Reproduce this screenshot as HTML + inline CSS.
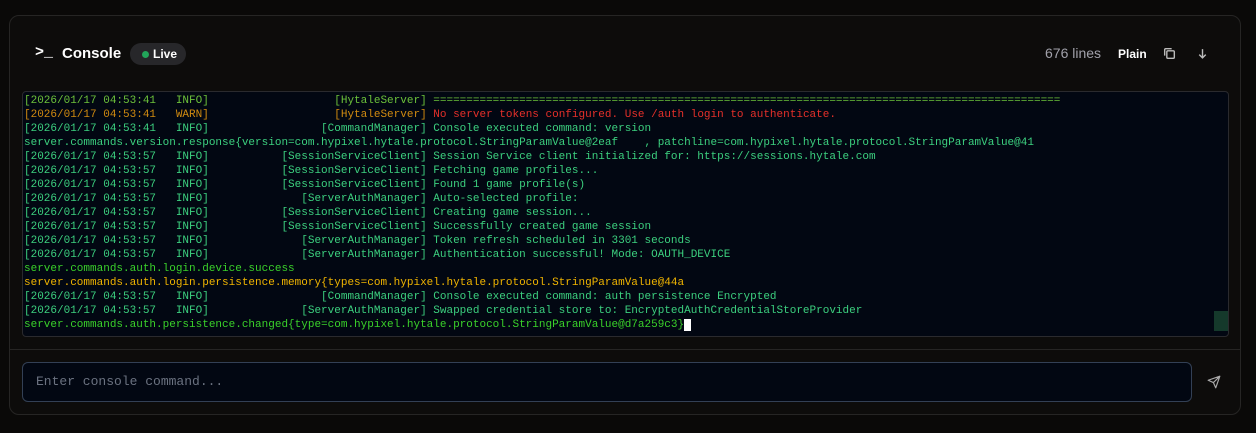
<!DOCTYPE html>
<html><head><style>
*{margin:0;padding:0;box-sizing:border-box}
body{width:1256px;height:433px;background:#0a0908;font-family:"Liberation Sans",sans-serif;position:relative;overflow:hidden}
.panel{position:absolute;left:9px;top:15px;width:1232px;height:400px;background:#0d0c0b;border:1px solid #262524;border-radius:10px}
.log{position:absolute;left:22px;top:91px;width:1207px;height:246px;background:#020712;border:1px solid #2a2a2e;border-radius:4px;overflow:hidden}
pre{font-family:"Liberation Mono",monospace;font-size:11px;line-height:14px;padding:2px 0 0 1px;white-space:pre;color:#3cd07f}
.w{color:#d08a10}.r{color:#e5302a}.o{color:#3ad12a}.y{color:#f0b400}.eq{color:#6cc13a}
.div{position:absolute;left:9px;top:349px;width:1232px;height:1px;background:#262524}
.inp{position:absolute;left:22px;top:362px;width:1170px;height:40px;background:#020712;border:1px solid #334055;border-radius:6px;color:#6b7280;font-family:"Liberation Mono",monospace;font-size:13px;line-height:38px;padding-left:13px}
</style></head><body>
<div class="panel"></div>
<div style="position:absolute;left:35px;top:44px;color:#fff;font-size:15px;font-weight:bold;font-family:'Liberation Mono',monospace">&gt;_</div>
<div style="position:absolute;left:62px;top:45px;color:#fff;font-size:15px;font-weight:bold">Console</div>
<div style="position:absolute;left:130px;top:43px;width:56px;height:22px;background:#27272a;border-radius:11px;color:#fff;font-size:12px;font-weight:bold;line-height:22px;padding-left:23px"><span style="position:absolute;left:12px;top:8px;width:7px;height:7px;border-radius:50%;background:#22a55a"></span>Live</div>
<div style="position:absolute;left:1045px;top:45px;color:#a1a1aa;font-size:14px">676 lines</div>
<div style="position:absolute;left:1118px;top:47px;color:#fff;font-size:12px;font-weight:bold">Plain</div>
<svg style="position:absolute;left:1162px;top:46px" width="15" height="15" viewBox="0 0 14 14" fill="none" stroke="#bbb" stroke-width="1.3"><rect x="4.5" y="4.5" width="7" height="7" rx="1"/><path d="M2.5 9V3.5a1 1 0 0 1 1-1H9"/></svg>
<svg style="position:absolute;left:1196px;top:47px" width="13" height="13" viewBox="0 0 12 12" fill="none" stroke="#bbb" stroke-width="1.3"><path d="M6 2v8M3 7l3 3 3-3"/></svg>
<div class="log"><pre><span class="eq">[2026/01/17 04:53:41   INFO]                   [HytaleServer] ===============================================================================================</span>
<span class="w">[2026/01/17 04:53:41   WARN]                   [HytaleServer] </span><span class="r">No server tokens configured. Use /auth login to authenticate.</span>
[2026/01/17 04:53:41   INFO]                 [CommandManager] Console executed command: version
server.commands.version.response{version=com.hypixel.hytale.protocol.StringParamValue@2eaf    , patchline=com.hypixel.hytale.protocol.StringParamValue@41
[2026/01/17 04:53:57   INFO]           [SessionServiceClient] Session Service client initialized for: https://sessions.hytale.com
[2026/01/17 04:53:57   INFO]           [SessionServiceClient] Fetching game profiles...
[2026/01/17 04:53:57   INFO]           [SessionServiceClient] Found 1 game profile(s)
[2026/01/17 04:53:57   INFO]              [ServerAuthManager] Auto-selected profile:
[2026/01/17 04:53:57   INFO]           [SessionServiceClient] Creating game session...
[2026/01/17 04:53:57   INFO]           [SessionServiceClient] Successfully created game session
[2026/01/17 04:53:57   INFO]              [ServerAuthManager] Token refresh scheduled in 3301 seconds
[2026/01/17 04:53:57   INFO]              [ServerAuthManager] Authentication successful! Mode: OAUTH_DEVICE
<span class="o">server.commands.auth.login.device.success</span>
<span class="y">server.commands.auth.login.persistence.memory{types=com.hypixel.hytale.protocol.StringParamValue@44a</span>
[2026/01/17 04:53:57   INFO]                 [CommandManager] Console executed command: auth persistence Encrypted
[2026/01/17 04:53:57   INFO]              [ServerAuthManager] Swapped credential store to: EncryptedAuthCredentialStoreProvider
<span class="o">server.commands.auth.persistence.changed{type=com.hypixel.hytale.protocol.StringParamValue@d7a259c3}</span><span style="background:#fff">&nbsp;</span></pre>
<div style="position:absolute;right:0;top:219px;width:14px;height:20px;background:#15392b"></div>
</div>
<div class="div"></div>
<div class="inp">Enter console command...</div>
<svg style="position:absolute;left:1207px;top:375px" width="14" height="14" viewBox="0 0 24 24" fill="none" stroke="#aaa" stroke-width="2" stroke-linejoin="round"><path d="M22 2L11 13M22 2l-7 20-4-9-9-4z"/></svg>
</body></html>
